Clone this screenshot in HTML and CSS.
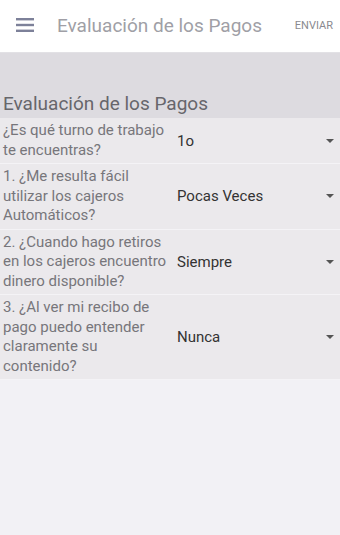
FILE: index.html
```html
<!DOCTYPE html>
<html lang="es">
<head>
    <meta charset="UTF-8">
    <meta name="viewport" content="width=device-width, initial-scale=1.0">
    <title>Evaluación de los Pagos</title>
    <link rel="stylesheet" href="styles.css">
</head>
<body>

    <!-- Barra superior -->
    <div class="toolbar">
        <div class="menu-icon">
            <svg width="18" height="14" viewBox="0 0 18 14">
                <rect x="0" y="0" width="18" height="2.4" fill="#7d8199"/>
                <rect x="0" y="5.8" width="18" height="2.4" fill="#7d8199"/>
                <rect x="0" y="11.6" width="18" height="2.4" fill="#7d8199"/>
            </svg>
        </div>
        <div class="toolbar-title">Evaluación de los Pagos</div>
        <div class="toolbar-action">ENVIAR</div>
    </div>

    <!-- Encabezado de sección -->
    <div class="section-header">
        <span>Evaluación de los Pagos</span>
    </div>

    <!-- Preguntas -->
    <div class="form">
        <div class="row">
            <div class="question">¿Es qué turno de trabajo te encuentras?</div>
            <div class="answer">1o</div>
            <div class="arrow"></div>
        </div>
        <div class="row">
            <div class="question">1. ¿Me resulta fácil utilizar los cajeros Automáticos?</div>
            <div class="answer">Pocas Veces</div>
            <div class="arrow"></div>
        </div>
        <div class="row">
            <div class="question">2. ¿Cuando hago retiros en los cajeros encuentro dinero disponible?</div>
            <div class="answer">Siempre</div>
            <div class="arrow"></div>
        </div>
        <div class="row">
            <div class="question">3. ¿Al ver mi recibo de pago puedo entender claramente su contenido?</div>
            <div class="answer">Nunca</div>
            <div class="arrow"></div>
        </div>
    </div>

</body>
</html>
```

FILE: styles.css
```css
/* Reset */
* {
    margin: 0;
    padding: 0;
    box-sizing: border-box;
}

body {
    font-family: 'Roboto', 'Liberation Sans', sans-serif;
    background-color: #f2f1f5;
    min-height: 100vh;
}

/* Barra superior */
.toolbar {
    height: 53px;
    background-color: #fff;
    border-bottom: 1px solid #e2e1e5;
    display: flex;
    align-items: center;
}

.menu-icon {
    width: 57px;
    padding-left: 16px;
    display: flex;
    align-items: center;
    margin-top: -2px;
}

.toolbar-title {
    flex: 1;
    font-size: 19px;
    color: #a09fa6;
    margin-top: -2px;
}

.toolbar-action {
    font-size: 11px;
    color: #8a8a8f;
    padding-right: 7px;
    margin-top: -2px;
}

/* Encabezado de sección */
.section-header {
    height: 65px;
    background-color: #dddbe0;
    display: flex;
    align-items: flex-end;
    padding: 0 0 3px 3px;
    font-size: 19px;
    color: #67666b;
}

/* Filas del formulario */
.form {
    background-color: #ebe9ec;
}

.row {
    display: flex;
    align-items: center;
    padding: 3px 0 3px 3px;
    border-bottom: 1px solid #f4f3f6;
    min-height: 45px;
}

.question {
    width: 174px;
    padding-right: 6px;
    font-size: 15px;
    line-height: 19.5px;
    color: #77767b;
}

.answer {
    flex: 1;
    font-size: 15px;
    color: #333;
}

.arrow {
    width: 0;
    height: 0;
    border-left: 4px solid transparent;
    border-right: 4px solid transparent;
    border-top: 4px solid #555;
    margin-right: 6px;
}
```
